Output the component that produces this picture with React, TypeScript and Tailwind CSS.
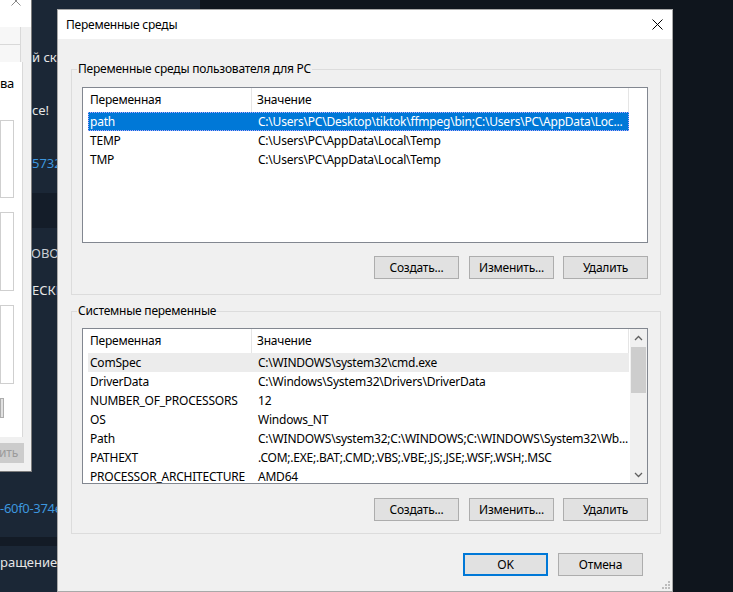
import React from 'react';

const ui = "font-['Segoe_UI','Noto_Sans',sans-serif] text-[12px] tracking-[-0.22px] text-black";

type Row = { name: string; value: string };

const userVars: Row[] = [
  { name: 'path', value: 'C:\\Users\\PC\\Desktop\\tiktok\\ffmpeg\\bin;C:\\Users\\PC\\AppData\\Loc...' },
  { name: 'TEMP', value: 'C:\\Users\\PC\\AppData\\Local\\Temp' },
  { name: 'TMP', value: 'C:\\Users\\PC\\AppData\\Local\\Temp' }
];

const systemVars: Row[] = [
  { name: 'ComSpec', value: 'C:\\WINDOWS\\system32\\cmd.exe' },
  { name: 'DriverData', value: 'C:\\Windows\\System32\\Drivers\\DriverData' },
  { name: 'NUMBER_OF_PROCESSORS', value: '12' },
  { name: 'OS', value: 'Windows_NT' },
  { name: 'Path', value: 'C:\\WINDOWS\\system32;C:\\WINDOWS;C:\\WINDOWS\\System32\\Wb...' },
  { name: 'PATHEXT', value: '.COM;.EXE;.BAT;.CMD;.VBS;.VBE;.JS;.JSE;.WSF;.WSH;.MSC' },
  { name: 'PROCESSOR_ARCHITECTURE', value: 'AMD64' }
];

const Button: React.FC<{ label: string; primary?: boolean; className?: string }> = ({ label, primary, className = '' }) => (
  <div
    className={`h-[23px] w-[85px] flex items-center justify-center bg-[#e1e1e1] ${
      primary ? 'border-2 border-[#0078d7]' : 'border border-[#adadad]'
    } ${className}`}
  >
    {label}
  </div>
);

const ListHeader: React.FC<{ width: number }> = ({ width }) => (
  <div className="flex h-[24px] bg-white shrink-0" style={{ width }}>
    <div className="w-[169px] pl-[7px] flex items-center border-r border-[#e5e5e5]">Переменная</div>
    <div className="w-[377px] pl-[5px] flex items-center border-r border-[#e5e5e5]">Значение</div>
  </div>
);

const ListRow: React.FC<{ row: Row; state?: 'focus' | 'soft' }> = ({ row, state }) => (
  <div
    className={`ml-[5px] w-[541px] h-[19px] shrink-0 flex items-center whitespace-nowrap ${
      state === 'focus'
        ? 'bg-[#0078d7] text-white outline-1 outline-dotted outline-[#b9a6ff] -outline-offset-1'
        : state === 'soft'
        ? 'bg-[#ececec]'
        : ''
    }`}
  >
    <div className="w-[164px] pl-[2px] overflow-hidden">{row.name}</div>
    <div className="w-[377px] pl-[6px] pr-[2px] overflow-hidden">{row.value}</div>
  </div>
);

const ScrollBar: React.FC = () => (
  <div className="w-[17px] h-full bg-[#f0f0f0] flex flex-col items-center shrink-0">
    <div className="h-[17px] flex items-center justify-center">
      <svg width="9" height="6" viewBox="0 0 9 6">
        <path d="M1 5 L4.5 1.5 L8 5" stroke="#606060" strokeWidth="1.3" fill="none" />
      </svg>
    </div>
    <div className="mt-[1px] w-[15px] h-[46px] bg-[#cdcdcd]" />
    <div className="flex-1" />
    <div className="h-[17px] flex items-center justify-center">
      <svg width="9" height="6" viewBox="0 0 9 6">
        <path d="M1 1 L4.5 4.5 L8 1" stroke="#606060" strokeWidth="1.3" fill="none" />
      </svg>
    </div>
  </div>
);

const ButtonRow: React.FC = () => (
  <div className="flex justify-end pr-[12px]">
    <Button label="Создать..." />
    <Button label="Изменить..." className="ml-[10px]" />
    <Button label="Удалить" className="ml-[9px]" />
  </div>
);

const GroupBox: React.FC<{ title: string; children: React.ReactNode; className?: string }> = ({ title, children, className = '' }) => (
  <fieldset className={`ml-[13px] w-[590px] border border-[#dcdcdc] ${className}`}>
    <legend className="ml-[5px] px-[1px] h-[16px] leading-[16px]">{title}</legend>
    {children}
  </fieldset>
);

const EnvDialog: React.FC = () => (
  <div className={`absolute left-[57px] top-[9px] w-[616px] h-[583px] bg-[#f0f0f0] border border-[#a9a9a9] flex flex-col ${ui}`}>
    <div className="h-[29px] bg-white flex items-center justify-between pl-[8px] pr-[9px] shrink-0">
      <span>Переменные среды</span>
      <svg width="11" height="11" viewBox="0 0 11 11">
        <path d="M0.5 0.5 L10.5 10.5 M10.5 0.5 L0.5 10.5" stroke="#000" strokeWidth="1" />
      </svg>
    </div>

    <GroupBox title="Переменные среды пользователя для PC" className="mt-[22px] pb-[15px]">
      <div className="mt-[10px] ml-[10px] w-[566px] h-[156px] bg-white border border-[#828790] flex flex-col">
        <ListHeader width={564} />
        <ListRow row={userVars[0]} state="focus" />
        {userVars.slice(1).map(r => (
          <ListRow key={r.name} row={r} />
        ))}
      </div>
      <div className="mt-[13px]">
        <ButtonRow />
      </div>
    </GroupBox>

    <GroupBox title="Системные переменные" className="mt-[8px] pb-[12px]">
      <div className="mt-[9px] ml-[10px] w-[566px] h-[156px] bg-white border border-[#828790] flex">
        <div className="flex-1 flex flex-col overflow-hidden">
          <ListHeader width={547} />
          {systemVars.map((r, i) => (
            <ListRow key={r.name} row={r} state={i === 0 ? 'soft' : undefined} />
          ))}
        </div>
        <ScrollBar />
      </div>
      <div className="mt-[14px]">
        <ButtonRow />
      </div>
    </GroupBox>

    <div className="mt-[19px] flex justify-end pr-[29px]">
      <Button label="OK" primary />
      <Button label="Отмена" className="ml-[10px]" />
    </div>

    {/* size grip */}
    <svg className="absolute right-[2px] bottom-[2px]" width="10" height="10" viewBox="0 0 10 10">
      {[[8, 0], [8, 3], [5, 3], [8, 6], [5, 6], [2, 6]].map(([x, y]) => (
        <rect key={`${x}-${y}`} x={x} y={y + 2} width="2" height="2" fill="#bcbcbc" />
      ))}
    </svg>
  </div>
);

const BackWindow: React.FC = () => (
  <div className={`absolute left-0 top-[-16px] w-[32px] h-[488px] bg-[#f0f0f0] border-r border-b border-[#7d7d7d] flex flex-col overflow-hidden ${ui}`}>
    <div className="h-[43px] bg-white shrink-0 relative">
      <svg className="absolute left-[11px] top-[12px]" width="10" height="10" viewBox="0 0 10 10">
        <path d="M0.5 0.5 L9.5 9.5 M9.5 0.5 L0.5 9.5" stroke="#8a8a8a" strokeWidth="1" />
      </svg>
    </div>
    <div className="h-[35px] shrink-0 flex flex-col">
      <div className="w-[21px] h-[18px] border-r border-b border-[#d9d9d9] bg-[#f7f7f7]" />
      <div className="w-[21px] h-[17px] border-r border-[#d9d9d9] bg-[#f7f7f7]" />
    </div>
    <div className="w-[23px] h-[375px] bg-white border-r border-[#d9d9d9] flex flex-col shrink-0">
      <div className="mt-[13px] h-[16px] leading-[16px] text-[13px] whitespace-nowrap">ва</div>
      <div className="mt-[29px] w-[14px] h-[78px] border border-[#cfcfcf] bg-white" />
      <div className="mt-[14px] w-[14px] h-[79px] border border-[#cfcfcf] bg-white" />
      <div className="mt-[14px] w-[14px] h-[79px] border border-[#cfcfcf] bg-white" />
      <div className="mt-[14px] w-[4px] h-[20px] border border-[#adadad] bg-[#e1e1e1]" />
    </div>
    <div className="mt-[6px] w-[24px] h-[20px] bg-[#cccccc] flex items-center justify-end pr-[6px] text-[#9b9b9b] whitespace-nowrap overflow-hidden">
      ить
    </div>
  </div>
);

const Desktop: React.FC = () => (
  <div className="w-[200px] h-full bg-[#1b2736] flex flex-col font-['Segoe_UI','Noto_Sans',sans-serif] text-[13px] whitespace-nowrap">
    <div className="h-[47px]" />
    <div className="h-[20px] leading-[20px] pl-[32px] text-[#e6e6e6]">й скачать</div>
    <div className="h-[33px]" />
    <div className="h-[20px] leading-[20px] pl-[32px] text-[#e6e6e6]">ce!</div>
    <div className="h-[33px]" />
    <div className="h-[20px] leading-[20px] pl-[32px] text-[#3d96de]">57322</div>
    <div className="h-[20px]" />
    <div className="h-[35px] bg-[#141d29]" />
    <div className="h-[15px]" />
    <div className="h-[20px] leading-[20px] pl-[31px] text-[#c9ced4]">ОВОЕ</div>
    <div className="h-[17px]" />
    <div className="h-[20px] leading-[20px] pl-[32px] text-[#e6e6e6]">ЕСКИЕ</div>
    <div className="h-[198px]" />
    <div className="h-[20px] leading-[20px] tracking-[-0.3px] text-[#3d96de]">-60f0-374e</div>
    <div className="h-[19px]" />
    <div className="h-[9px] bg-[#131b26]" />
    <div className="h-[6px]" />
    <div className="h-[20px] leading-[20px] text-[#e6e6e6]">ращение</div>
  </div>
);

export default function App() {
  return (
    <div className="relative w-[733px] h-[592px] overflow-hidden bg-[#0f151d]">
      <Desktop />
      <BackWindow />
      <EnvDialog />
    </div>
  );
}
